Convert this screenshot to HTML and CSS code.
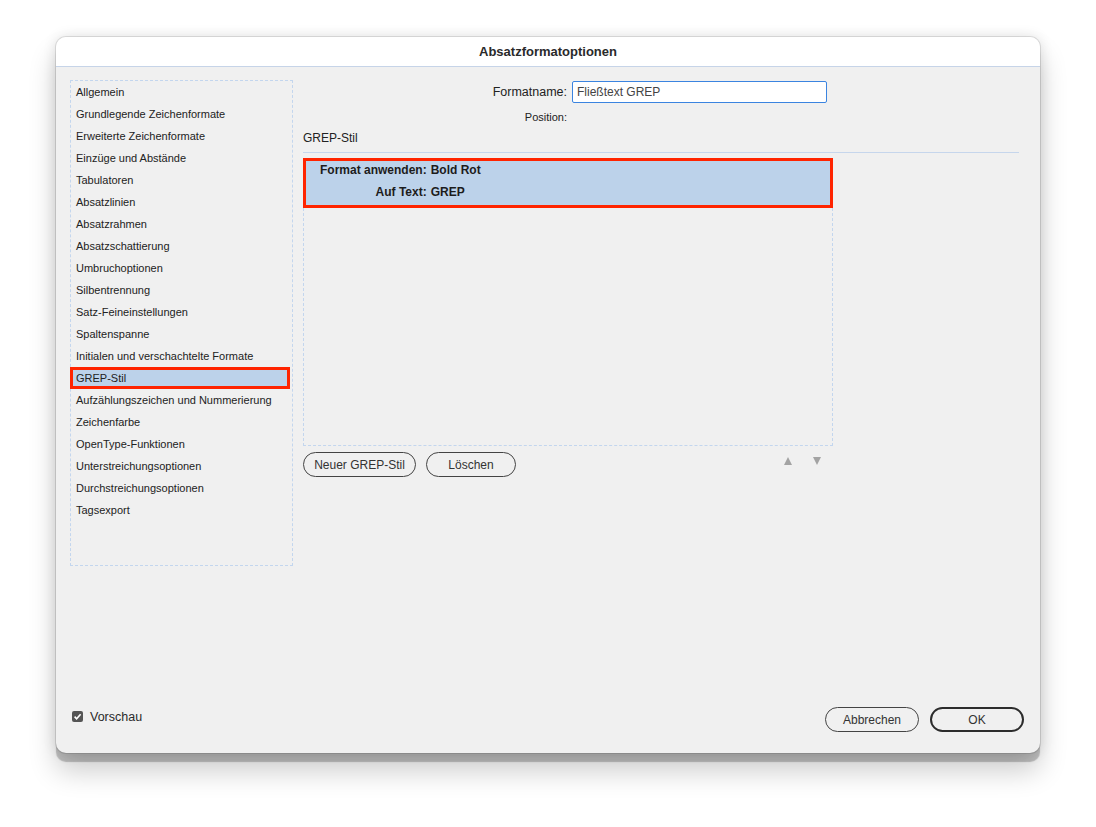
FILE: index.html
```html
<!DOCTYPE html>
<html lang="de">
<head>
    <meta charset="UTF-8">
    <meta name="viewport" content="width=device-width, initial-scale=1.0">
    <title>Absatzformatoptionen</title>
    <link rel="stylesheet" href="styles.css">
</head>
<body>
    <div class="dialog">
        <div class="titlebar">Absatzformatoptionen</div>

        <div class="content">
            <ul class="sidebar">
                <li>Allgemein</li>
                <li>Grundlegende Zeichenformate</li>
                <li>Erweiterte Zeichenformate</li>
                <li>Einzüge und Abstände</li>
                <li>Tabulatoren</li>
                <li>Absatzlinien</li>
                <li>Absatzrahmen</li>
                <li>Absatzschattierung</li>
                <li>Umbruchoptionen</li>
                <li>Silbentrennung</li>
                <li>Satz-Feineinstellungen</li>
                <li>Spaltenspanne</li>
                <li>Initialen und verschachtelte Formate</li>
                <li class="selected">GREP-Stil</li>
                <li>Aufzählungszeichen und Nummerierung</li>
                <li>Zeichenfarbe</li>
                <li>OpenType-Funktionen</li>
                <li>Unterstreichungsoptionen</li>
                <li>Durchstreichungsoptionen</li>
                <li>Tagsexport</li>
            </ul>

            <div class="main">
                <div class="field-row">
                    <label for="formatname" class="label-big">Formatname:</label>
                    <input type="text" id="formatname" value="Fließtext GREP">
                </div>
                <div class="field-row position-row">
                    <span class="label-small">Position:</span>
                    <span></span>
                </div>

                <h2 class="section-title">GREP-Stil</h2>

                <div class="grep-box">
                    <div class="grep-item">
                        <span class="grep-key">Format anwenden:</span>
                        <span>Bold Rot</span>
                        <span class="grep-key">Auf Text:</span>
                        <span>GREP</span>
                    </div>
                </div>

                <div class="grep-actions">
                    <button type="button" class="pill btn-new">Neuer GREP-Stil</button>
                    <button type="button" class="pill btn-delete">Löschen</button>
                    <div class="arrows">
                        <span class="arrow-up"></span>
                        <span class="arrow-down"></span>
                    </div>
                </div>
            </div>
        </div>

        <div class="footer">
            <label class="preview">
                <span class="checkbox">
                    <svg width="11" height="11" viewBox="0 0 11 11"><path d="M2.6 5.6 L4.6 7.8 L8.6 3.2" fill="none" stroke="#fff" stroke-width="1.6"/></svg>
                </span>
                Vorschau
            </label>
            <div class="footer-buttons">
                <button type="button" class="pill btn-wide">Abbrechen</button>
                <button type="button" class="pill btn-wide btn-default">OK</button>
            </div>
        </div>
    </div>
</body>
</html>
```

FILE: styles.css
```css
body {
    box-sizing: border-box;
    margin: 0;
    min-height: 100vh;
    padding: 37px 0 0 56px;
    background-color: #fff;
    font-family: "Liberation Sans", Arial, sans-serif;
    color: #222;
}

.dialog {
    box-sizing: border-box;
    width: 984px;
    height: 716px;
    background-color: #f0f0f0;
    border-radius: 10px;
    display: flex;
    flex-direction: column;
    overflow: hidden;
    box-shadow: 0 0 0 1px rgba(0, 0, 0, 0.1),
                0 0 14px rgba(0, 0, 0, 0.12),
                0 9px 1px rgba(0, 0, 0, 0.22),
                0 18px 28px rgba(0, 0, 0, 0.2);
}

.titlebar {
    height: 29px;
    line-height: 29px;
    background-color: #fff;
    border-bottom: 1px solid #c6d4e8;
    text-align: center;
    font-weight: bold;
    font-size: 13px;
    color: #2a2a2a;
}

.content {
    flex: 1;
    display: flex;
    gap: 10px;
    padding: 13px 21px 0 14px;
}

.sidebar {
    box-sizing: border-box;
    width: 223px;
    height: 486px;
    margin: 0;
    padding: 0 2px 0 0;
    list-style: none;
    border: 1px dashed #c3d6ee;
    font-size: 11px;
}

.sidebar li {
    height: 22px;
    line-height: 22px;
    padding-left: 5px;
    white-space: nowrap;
}

.sidebar li.selected {
    box-sizing: border-box;
    margin-left: -1px;
    padding-left: 3px;
    background-color: #bcd2ea;
    border: 3px solid #ff2400;
    line-height: 16px;
}

.main {
    flex: 1;
}

.field-row {
    display: grid;
    grid-template-columns: 264px 255px;
    column-gap: 5px;
    align-items: center;
}

.field-row:first-child {
    margin-top: 1px;
}

.label-big {
    text-align: right;
    font-size: 12.5px;
}

.label-small {
    text-align: right;
    font-size: 11px;
}

.position-row {
    margin-top: 7px;
    height: 14px;
}

input {
    box-sizing: border-box;
    height: 22px;
    padding: 0 4px;
    border: 1px solid #3b84e0;
    border-radius: 2px;
    background-color: #fff;
    font-family: inherit;
    font-size: 12px;
    color: #444;
    outline: none;
}

.section-title {
    margin: 7px 0 0 0;
    padding-bottom: 7px;
    height: 14px;
    line-height: 14px;
    font-size: 12px;
    font-weight: normal;
    border-bottom: 1px solid #c6d6ec;
}

.grep-box {
    box-sizing: border-box;
    width: 530px;
    height: 288px;
    margin-top: 5px;
    border: 1px dashed #c3d6ee;
}

.grep-item {
    box-sizing: border-box;
    margin: -1px -1px 0 -1px;
    height: 50px;
    padding: 0 0 0 14px;
    background-color: #bcd2ea;
    border: 3px solid #ff2400;
    display: grid;
    grid-template-columns: max-content max-content;
    grid-template-rows: 18px 26px;
    column-gap: 4px;
    align-items: center;
    font-size: 12px;
    font-weight: bold;
    color: #1c1c1c;
}

.grep-key {
    text-align: right;
}

.grep-actions {
    width: 530px;
    margin-top: 6px;
    display: flex;
    align-items: center;
    gap: 10px;
}

.pill {
    box-sizing: border-box;
    height: 25px;
    padding: 0;
    border: 1px solid #444;
    border-radius: 13px;
    background-color: #f0f0f0;
    font-family: inherit;
    font-size: 12px;
    color: #333;
}

.btn-new {
    width: 113px;
}

.btn-delete {
    width: 90px;
}

.arrows {
    margin-left: auto;
    margin-right: 12px;
    margin-bottom: 8px;
    display: flex;
    gap: 21px;
}

.arrow-up,
.arrow-down {
    width: 0;
    height: 0;
    border-left: 4.5px solid transparent;
    border-right: 4.5px solid transparent;
}

.arrow-up {
    border-bottom: 8px solid #a3a3a3;
}

.arrow-down {
    border-top: 8px solid #a3a3a3;
}

.footer {
    display: flex;
    align-items: center;
    justify-content: space-between;
    padding: 0 16px 21px 16px;
}

.preview {
    display: flex;
    align-items: center;
    gap: 7px;
    margin-bottom: 6px;
    font-size: 12.5px;
    color: #2a2a2a;
}

.checkbox {
    width: 11px;
    height: 11px;
    border-radius: 2px;
    background-color: #555;
    display: flex;
}

.footer-buttons {
    display: flex;
    gap: 11px;
}

.btn-wide {
    width: 94px;
}

.btn-default {
    border-width: 2px;
    border-color: #2c2c2c;
}
```
